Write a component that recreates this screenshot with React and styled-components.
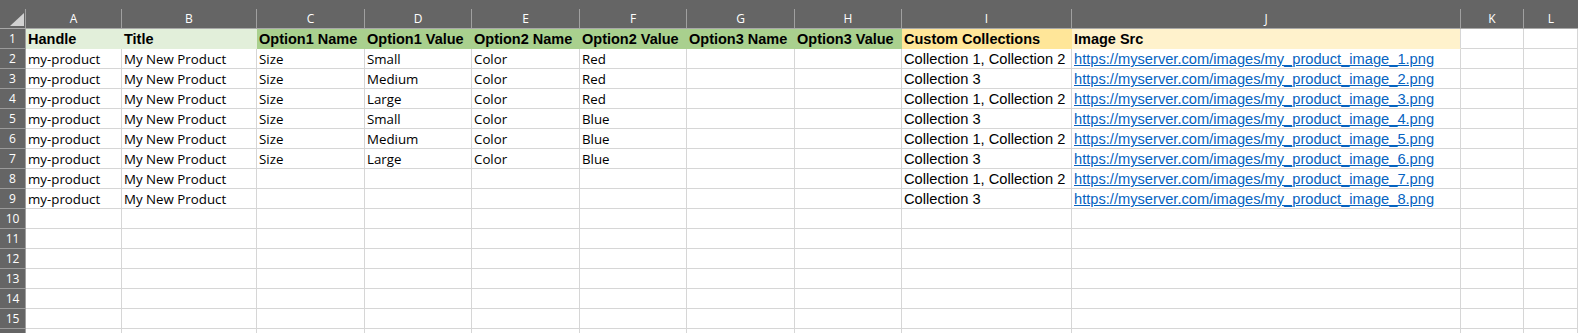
import React from "react";
import styled, { createGlobalStyle } from "styled-components";

const Global = createGlobalStyle`
  html, body { margin: 0; padding: 0; background: #ffffff; overflow: hidden; }
  * { box-sizing: border-box; }
`;

const TEMPLATE = "26px 96px 135px 108px 107px 108px 107px 108px 107px 170px 389px 63px 1fr";

const Sheet = styled.div`
  width: 1578px;
  height: 333px;
  overflow: hidden;
  background: #ffffff;
`;

const HeaderRow = styled.div`
  display: grid;
  grid-template-columns: ${TEMPLATE};
  background: #656565;
  padding-top: 9px;
  border-bottom: 1px solid #a8a8a8;
`;

const Corner = styled.div`
  position: relative;
  height: 19px;
  border-right: 1px solid #a0a0a0;
`;

const Triangle = styled.div`
  position: absolute;
  right: 1px;
  top: 4px;
  width: 0;
  height: 0;
  border-left: 14px solid transparent;
  border-bottom: 13px solid #d2d2d2;
`;

const ColLetter = styled.div`
  height: 19px;
  border-right: ${(p) => (p.$last ? "none" : "1px solid #a0a0a0")};
  color: #ffffff;
  font-family: "Open Sans", "Noto Sans", sans-serif;
  font-size: 12px;
  line-height: 19px;
  text-align: center;
`;

const Row = styled.div`
  display: grid;
  grid-template-columns: ${TEMPLATE};
  height: 20px;
`;

const RowNum = styled.div`
  background: #656565;
  color: #ffffff;
  border-right: 1px solid #a0a0a0;
  border-bottom: 1px solid #9a9a9a;
  font-family: "Open Sans", "Noto Sans", sans-serif;
  font-size: 12px;
  line-height: 19px;
  text-align: center;
`;

const Cell = styled.div`
  height: 20px;
  padding-left: 2px;
  padding-top: 1px;
  white-space: nowrap;
  overflow: visible;
  line-height: 18px;
  background: ${(p) => p.$fill || "transparent"};
  border-right: 1px solid ${(p) => (p.$fill && !p.$edge ? p.$fill : "#d6d6d6")};
  border-bottom: 1px solid ${(p) => p.$fill || "#d6d6d6"};
  color: #000000;
  font-family: ${(p) =>
    p.$arial ? '"Liberation Sans", Arial, sans-serif' : '"Open Sans", "Noto Sans", sans-serif'};
  font-size: ${(p) => (p.$bold ? "14.5px" : p.$arial ? "14.67px" : "13.3px")};
  font-weight: ${(p) => (p.$bold ? 700 : 400)};
  position: relative;
  z-index: ${(p) => (p.$over ? 1 : 0)};
`;

const Link = styled.span`
  color: #0563c1;
  text-decoration: underline;
  text-underline-offset: 1px;
`;

const letters = ["A", "B", "C", "D", "E", "F", "G", "H", "I", "J", "K", "L"];

const headers = [
  { t: "Handle", fill: "#e2efda" },
  { t: "Title", fill: "#e2efda" },
  { t: "Option1 Name", fill: "#a9d08e" },
  { t: "Option1 Value", fill: "#a9d08e" },
  { t: "Option2 Name", fill: "#a9d08e" },
  { t: "Option2 Value", fill: "#a9d08e" },
  { t: "Option3 Name", fill: "#a9d08e" },
  { t: "Option3 Value", fill: "#a9d08e" },
  { t: "Custom Collections", fill: "#ffe699" },
  { t: "Image Src", fill: "#fff2cc", edge: true },
];

const variants = [
  ["Size", "Small", "Color", "Red"],
  ["Size", "Medium", "Color", "Red"],
  ["Size", "Large", "Color", "Red"],
  ["Size", "Small", "Color", "Blue"],
  ["Size", "Medium", "Color", "Blue"],
  ["Size", "Large", "Color", "Blue"],
  ["", "", "", ""],
  ["", "", "", ""],
];

export default function App() {
  const bodyRows = [];
  for (let r = 2; r <= 16; r++) {
    const i = r - 2;
    const has = i < 8;
    const v = has ? variants[i] : ["", "", "", ""];
    const coll = has ? (i % 2 === 0 ? "Collection 1, Collection 2" : "Collection 3") : "";
    bodyRows.push(
      <Row key={r}>
        <RowNum>{r}</RowNum>
        <Cell>{has ? "my-product" : ""}</Cell>
        <Cell>{has ? "My New Product" : ""}</Cell>
        <Cell>{v[0]}</Cell>
        <Cell>{v[1]}</Cell>
        <Cell>{v[2]}</Cell>
        <Cell>{v[3]}</Cell>
        <Cell />
        <Cell />
        <Cell $arial>{coll}</Cell>
        <Cell $arial>
          {has ? <Link>{`https://myserver.com/images/my_product_image_${i + 1}.png`}</Link> : ""}
        </Cell>
        <Cell />
        <Cell />
      </Row>
    );
  }

  return (
    <Sheet>
      <Global />
      <HeaderRow>
        <Corner>
          <Triangle />
        </Corner>
        {letters.map((l, idx) => (
          <ColLetter key={l} $last={idx === letters.length - 1}>
            {l}
          </ColLetter>
        ))}
      </HeaderRow>
      <Row>
        <RowNum>1</RowNum>
        {headers.map((h) => (
          <Cell key={h.t} $arial $bold $fill={h.fill} $edge={h.edge} $over>
            {h.t}
          </Cell>
        ))}
        <Cell />
        <Cell />
      </Row>
      {bodyRows}
    </Sheet>
  );
}
